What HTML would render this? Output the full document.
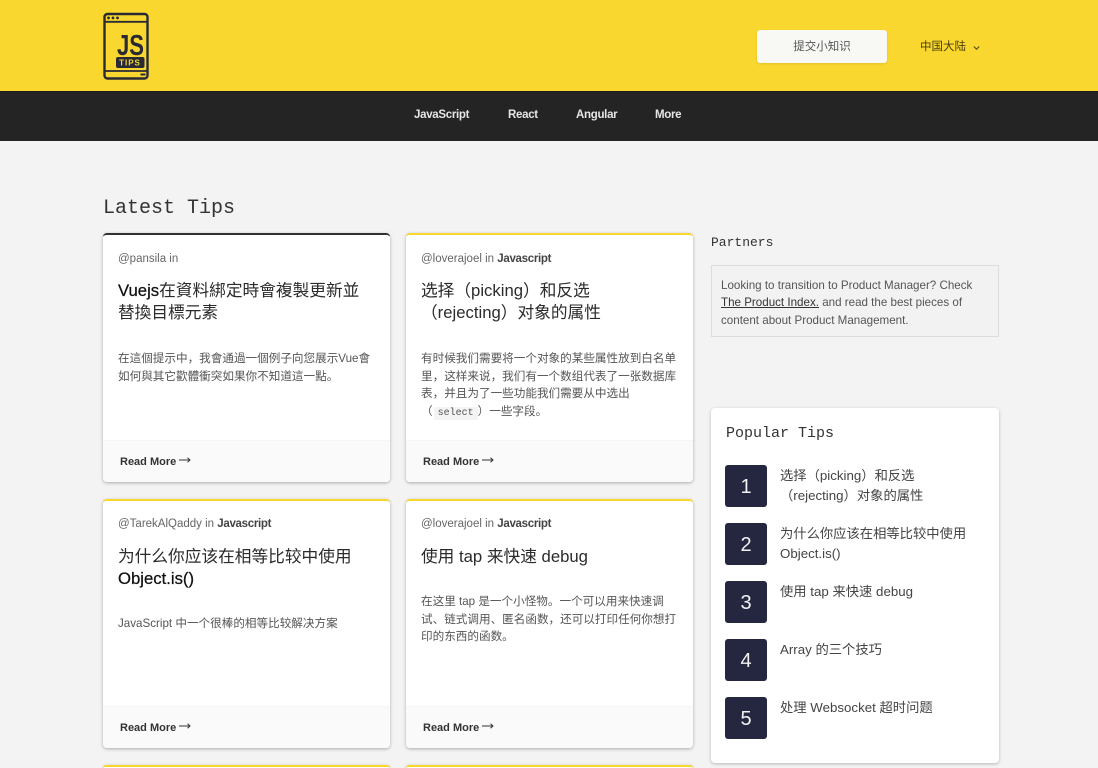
<!DOCTYPE html>
<html lang="zh">
<head>
<meta charset="utf-8">
<title>JS Tips</title>
<style>
*{box-sizing:border-box}
html,body{margin:0;padding:0;width:1098px;height:768px;overflow:hidden}
#page{width:1098px;height:768px;overflow:hidden;position:relative;background:#f3f3f3;font-family:"Liberation Sans","Noto Sans CJK SC",sans-serif;color:#333}
.abs{position:absolute;white-space:nowrap}
#top{position:absolute;left:0;top:0;width:1098px;height:91px;background:#f9d72f}
#nav{position:absolute;left:0;top:91px;width:1098px;height:50px;background:#242424;border-top:1px solid #1d1d1d}
#nav span{position:absolute;top:17px;font-size:11.5px;letter-spacing:-.3px;font-weight:700;color:#e6e6e6;white-space:nowrap}
#btn{position:absolute;left:757px;top:30px;width:130px;height:33px;background:#f8f8f5;border-radius:3px;text-align:center;font-size:11.5px;line-height:34px;color:#555;box-shadow:0 1px 2px rgba(0,0,0,.1)}
.card{position:absolute;width:287px;height:249px;background:#fff;border-top:2px solid #f9d72f;border-radius:4px;box-shadow:0 1px 3px rgba(0,0,0,.3);overflow:hidden}
.card .by{position:absolute;left:15px;top:16px;font-size:11.5px;line-height:16px;color:#666;white-space:nowrap}
.card .by b{color:#444;letter-spacing:-.3px}
.card h3{position:absolute;left:15px;top:45px;margin:0;width:266px;font-size:16.7px;line-height:22px;font-weight:400;color:#2b2b2b}
.card h3 b{font-weight:400;color:#111;-webkit-text-stroke:.25px #111}
.card p{position:absolute;left:15px;top:115px;margin:0;width:262px;font-size:11.6px;line-height:17.5px;color:#555}
.card code{font-family:"Liberation Mono",monospace;font-size:10px;background:#f4f4f4;padding:1px 4px;margin-left:1px;border-radius:2px;color:#555}
.foot{position:absolute;left:0;top:205px;width:287px;height:43px;background:#fafafa;border-top:1px solid #f5f5f5}
.foot span{position:absolute;left:17px;top:13px;font-size:11px;font-weight:700;line-height:16px;color:#333;white-space:nowrap}
.foot svg{position:absolute;left:76px;top:15px}
.mono{font-family:"Liberation Mono","DejaVu Sans Mono",monospace;color:#333}
#partner{position:absolute;left:711px;top:265px;width:288px;height:72px;border:1px solid #dcdcdc;background:#f2f2f2;font-size:11.6px;line-height:17.5px;color:#555;padding:10.5px 9px}
#partner u{color:#333}
#pop{position:absolute;left:711px;top:408px;width:288px;height:355px;background:#fff;border-radius:4px;box-shadow:0 1px 3px rgba(0,0,0,.25)}
.num{position:absolute;left:14px;width:42px;height:42px;background:#252740;border-radius:3px;color:#f2f2f2;font-size:20px;line-height:45px;text-align:center}
.pt{position:absolute;left:69px;font-size:13.3px;line-height:19.5px;color:#444;width:205px}
</style>
</head>
<body>
<div id="page">
<div id="top"></div>
<svg style="position:absolute;left:102px;top:12px" width="48" height="68" viewBox="0 0 48 68">
<rect x="2.5" y="2" width="43" height="64.5" rx="3" fill="none" stroke="#2a2a35" stroke-width="2.4"/>
<path d="M2 9.8H46M2 59H46" stroke="#2a2a35" stroke-width="1.8" fill="none"/>
<circle cx="6.5" cy="5.9" r="1.4" fill="#2a2a35"/><circle cx="11" cy="5.9" r="1.4" fill="#2a2a35"/><circle cx="15.5" cy="5.9" r="1.4" fill="#2a2a35"/>
<rect x="38.5" y="61.5" width="5" height="2" fill="#2a2a35"/>
<rect x="14" y="45" width="28.5" height="11" rx="2" fill="#2a2a35"/>
<text x="15" y="43" textLength="27" lengthAdjust="spacingAndGlyphs" font-family="Liberation Sans" font-weight="700" font-size="29" fill="#2a2a35">JS</text>
<text x="28" y="53.5" text-anchor="middle" font-family="Liberation Sans" font-weight="700" font-size="8" letter-spacing="1" fill="#f9d72f">TIPS</text>
</svg>
<div id="btn">提交小知识</div>
<div class="abs" style="left:920px;top:39px;font-size:11.5px;line-height:17px;color:#4a400e">中国大陆</div>
<svg style="position:absolute;left:973px;top:45px" width="7" height="6" viewBox="0 0 7 6"><path d="M.8 1.5L3.5 4.2L6.2 1.5" fill="none" stroke="#5a4d10" stroke-width="1.1"/></svg>
<div id="nav">
<span style="left:414px">JavaScript</span>
<span style="left:508px">React</span>
<span style="left:576px">Angular</span>
<span style="left:655px">More</span>
</div>

<div class="abs mono" style="left:103px;top:196px;font-size:20px;line-height:26px">Latest Tips</div>

<div class="card" style="left:103px;top:233px;border-top-color:#333">
<div class="by">@pansila in</div>
<h3 style="font-family:'Liberation Sans','Noto Sans CJK TC',sans-serif"><b>Vuejs</b>在資料綁定時會複製更新並<br>替換目標元素</h3>
<p style="font-family:'Liberation Sans','Noto Sans CJK TC',sans-serif">在這個提示中，我會通過一個例子向您展示Vue會<br>如何與其它歡體衝突如果你不知道這一點。</p>
<div class="foot"><span>Read More</span><svg width="12" height="8" viewBox="0 0 12 8"><path d="M0 4H11M8.5 1.8L11 4L8.5 6.2" fill="none" stroke="#333" stroke-width="1"/></svg></div>
</div>

<div class="card" style="left:406px;top:233px">
<div class="by">@loverajoel in <b>Javascript</b></div>
<h3>选择（picking）和反选<br>（rejecting）对象的属性</h3>
<p>有时候我们需要将一个对象的某些属性放到白名单<br>里，这样来说，我们有一个数组代表了一张数据库<br>表，并且为了一些功能我们需要从中选出<br>（<code>select</code>）一些字段。</p>
<div class="foot"><span>Read More</span><svg width="12" height="8" viewBox="0 0 12 8"><path d="M0 4H11M8.5 1.8L11 4L8.5 6.2" fill="none" stroke="#333" stroke-width="1"/></svg></div>
</div>

<div class="card" style="left:103px;top:499px">
<div class="by" style="top:15px">@TarekAlQaddy in <b>Javascript</b></div>
<h3>为什么你应该在相等比较中使用<br><b>Object.is()</b></h3>
<p style="top:114px">JavaScript 中一个很棒的相等比较解决方案</p>
<div class="foot"><span>Read More</span><svg width="12" height="8" viewBox="0 0 12 8"><path d="M0 4H11M8.5 1.8L11 4L8.5 6.2" fill="none" stroke="#333" stroke-width="1"/></svg></div>
</div>

<div class="card" style="left:406px;top:499px">
<div class="by" style="top:15px">@loverajoel in <b>Javascript</b></div>
<h3>使用 tap 来快速 debug</h3>
<p style="top:92px">在这里 tap 是一个小怪物。一个可以用来快速调<br>试、链式调用、匿名函数，还可以打印任何你想打<br>印的东西的函数。</p>
<div class="foot"><span>Read More</span><svg width="12" height="8" viewBox="0 0 12 8"><path d="M0 4H11M8.5 1.8L11 4L8.5 6.2" fill="none" stroke="#333" stroke-width="1"/></svg></div>
</div>

<div class="card" style="left:103px;top:765px;height:3px;border-radius:4px 4px 0 0"></div>
<div class="card" style="left:406px;top:765px;height:3px;border-radius:4px 4px 0 0"></div>

<div class="abs mono" style="left:711px;top:234px;font-size:13px;line-height:17px">Partners</div>
<div id="partner">Looking to transition to Product Manager? Check <u>The Product Index.</u> and read the best pieces of content about Product Management.</div>

<div id="pop">
<div class="abs mono" style="left:15px;top:16px;font-size:15px;line-height:20px">Popular Tips</div>
<div class="num" style="top:57px">1</div><div class="pt" style="top:58px">选择（picking）和反选<br>（rejecting）对象的属性</div>
<div class="num" style="top:115px">2</div><div class="pt" style="top:116px">为什么你应该在相等比较中使用<br>Object.is()</div>
<div class="num" style="top:173px">3</div><div class="pt" style="top:174px">使用 tap 来快速 debug</div>
<div class="num" style="top:231px">4</div><div class="pt" style="top:232px">Array 的三个技巧</div>
<div class="num" style="top:289px">5</div><div class="pt" style="top:290px">处理 Websocket 超时问题</div>
</div>
</div>
</body>
</html>
